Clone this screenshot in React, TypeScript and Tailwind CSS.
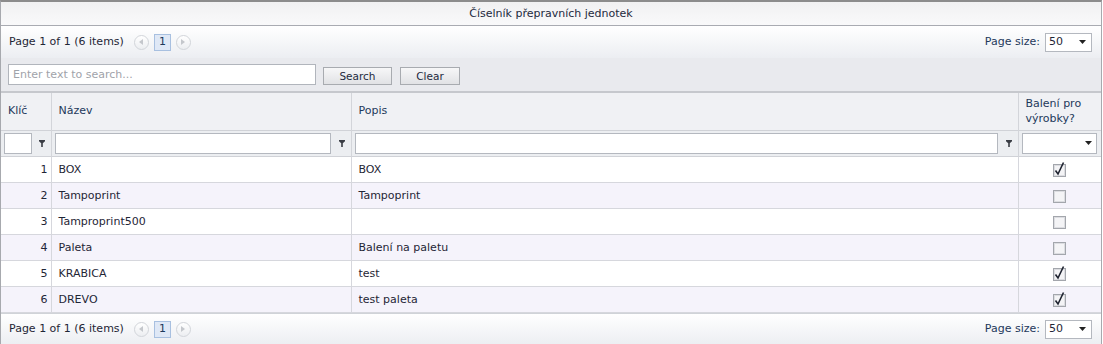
const rows = [
  { id: 1, name: 'BOX', desc: 'BOX', pack: true },
  { id: 2, name: 'Tampoprint', desc: 'Tampoprint', pack: false },
  { id: 3, name: 'Tamproprint500', desc: '', pack: false },
  { id: 4, name: 'Paleta', desc: 'Balení na paletu', pack: false },
  { id: 5, name: 'KRABICA', desc: 'test', pack: true },
  { id: 6, name: 'DREVO', desc: 'test paleta', pack: true },
];

function Funnel() {
  return (
    <svg width="6" height="7" viewBox="0 0 6 7" className="shrink-0">
      <path d="M0 0h6v1.3L3.8 3.3V7H2.2V3.3L0 1.3z" fill="#3a3d44" />
    </svg>
  );
}

function Arrow() {
  return (
    <svg width="7" height="4" viewBox="0 0 7 4">
      <path d="M0 0h7L3.5 4z" fill="#222" />
    </svg>
  );
}

function PagerCircle({ dir }: { dir: 'left' | 'right' }) {
  return (
    <div className="w-[15px] h-[15px] rounded-full border border-[#d2d5da] bg-gradient-to-b from-white to-[#eceef1] flex items-center justify-center">
      <svg width="4" height="6" viewBox="0 0 4 6">
        {dir === 'left' ? (
          <path d="M4 0v6L0 3z" fill="#c4c7cc" />
        ) : (
          <path d="M0 0v6l4-3z" fill="#c4c7cc" />
        )}
      </svg>
    </div>
  );
}

function Pager({ bottom }: { bottom?: boolean }) {
  return (
    <div
      className={`flex items-center justify-between h-[32px] pl-[8px] pr-[9px] bg-gradient-to-b from-white to-[#eceef2] ${
        bottom ? 'border-t border-[#d0d3d8]' : ''
      }`}
    >
      <div className="flex items-center">
        <span>Page 1 of 1 (6 items)</span>
        <div className="ml-[10px]">
          <PagerCircle dir="left" />
        </div>
        <div className="ml-[5px] w-[17px] h-[17px] border border-[#a8c0e0] bg-[#dfe8f6] flex items-center justify-center text-[#1e395b]">
          1
        </div>
        <div className="ml-[5px]">
          <PagerCircle dir="right" />
        </div>
      </div>
      <div className="flex items-center">
        <span className="text-[#1e395b]">Page size:</span>
        <div className="ml-[5px] w-[47px] h-[19px] bg-white border border-[#b4b8bf] flex items-center justify-between pl-[3px] pr-[5px]">
          <span>50</span>
          <Arrow />
        </div>
      </div>
    </div>
  );
}

function Checkbox({ checked }: { checked: boolean }) {
  return (
    <svg width="14" height="15" viewBox="0 0 14 15" className="block mx-auto">
      <rect x="0.5" y="2.5" width="12" height="12" fill="#f4f4f6" stroke="#a3a6ac" />
      <rect x="1.5" y="3.5" width="10" height="10" fill="none" stroke="#dcdde1" />
      {checked && (
        <path d="M2.5 8.5l2.5 3.5L10.5 0.5" fill="none" stroke="#1f2330" strokeWidth="1.6" />
      )}
    </svg>
  );
}

export default function App() {
  return (
    <div
      className="w-[1102px] bg-white text-[11px] text-[#1f2636] leading-[14px]"
      style={{ fontFamily: '"DejaVu Sans", Verdana, sans-serif' }}
    >
      <div className="border-l border-r border-[#a7a9ae] border-t-2 border-t-[#8c8c8c]">
        {/* Title */}
        <div className="h-[24px] flex items-center justify-center bg-gradient-to-b from-[#f1f1f2] to-[#f9f9fa] border-b border-[#a9abb2] text-[#1e2a3e]">
          Číselník přepravních jednotek
        </div>

        <Pager />

        {/* Search panel */}
        <div className="h-[35px] bg-[#e9eaee] flex items-center pl-[7px] border-b-2 border-[#c6c8cd]">
          <div className="w-[308px] h-[21px] bg-white border border-[#b1b5bc] flex items-center pl-[4px] text-[#9fa3aa]">
            Enter text to search...
          </div>
          <button className="ml-[7px] w-[69px] h-[18px] mt-[3px] border border-[#a8abb0] bg-gradient-to-b from-[#f7f7f8] to-[#e1e2e5] text-[#1e2a3e] text-[10.5px] leading-none">
            Search
          </button>
          <button className="ml-[8px] w-[60px] h-[18px] mt-[3px] border border-[#a8abb0] bg-gradient-to-b from-[#f7f7f8] to-[#e1e2e5] text-[#1e2a3e] text-[10.5px] leading-none">
            Clear
          </button>
        </div>

        {/* Grid */}
        <table className="w-full border-collapse table-fixed">
          <colgroup>
            <col className="w-[50px]" />
            <col className="w-[300px]" />
            <col />
            <col className="w-[83px]" />
          </colgroup>
          <thead>
            <tr className="h-[37px] bg-[#f0f1f4] text-[#1e395b] text-left">
              <th className="font-normal px-[7px] border-r border-[#d3d5da]">Klíč</th>
              <th className="font-normal px-[7px] border-r border-[#d3d5da]">Název</th>
              <th className="font-normal px-[7px] border-r border-[#d3d5da]">Popis</th>
              <th className="font-normal px-[7px] leading-[15px]">
                Balení pro
                <br />
                výrobky?
              </th>
            </tr>
            <tr className="h-[26px] bg-[#eceef1] border-t border-b border-[#d0d2d7]">
              <td className="pl-[3px] pr-[6px] border-r border-[#d3d5da]">
                <div className="flex items-center gap-[7px]">
                  <div className="w-[31px] h-[21px] bg-white border border-[#b4b8bf]" />
                  <Funnel />
                </div>
              </td>
              <td className="pl-[3px] pr-[6px] border-r border-[#d3d5da]">
                <div className="flex items-center gap-[8px]">
                  <div className="flex-1 h-[21px] bg-white border border-[#b4b8bf]" />
                  <Funnel />
                </div>
              </td>
              <td className="pl-[3px] pr-[6px] border-r border-[#d3d5da]">
                <div className="flex items-center gap-[8px]">
                  <div className="flex-1 h-[21px] bg-white border border-[#b4b8bf]" />
                  <Funnel />
                </div>
              </td>
              <td className="pl-[3px] pr-[4px]">
                <div className="h-[21px] bg-white border border-[#b4b8bf] flex items-center justify-end pr-[4px]">
                  <Arrow />
                </div>
              </td>
            </tr>
          </thead>
          <tbody>
            {rows.map((r, i) => (
              <tr
                key={r.id}
                className={`h-[26px] border-b border-[#d6d7dd] ${i % 2 === 1 ? 'bg-[#f5f3fb]' : 'bg-white'}`}
              >
                <td className="text-right pr-[3px] pt-[1px] border-r border-[#d6d7dd]">{r.id}</td>
                <td className="pl-[7px] pt-[1px] border-r border-[#d6d7dd]">{r.name}</td>
                <td className="pl-[7px] pt-[1px] border-r border-[#d6d7dd]">{r.desc}</td>
                <td>
                  <Checkbox checked={r.pack} />
                </td>
              </tr>
            ))}
          </tbody>
        </table>

        <Pager bottom />
      </div>
    </div>
  );
}
